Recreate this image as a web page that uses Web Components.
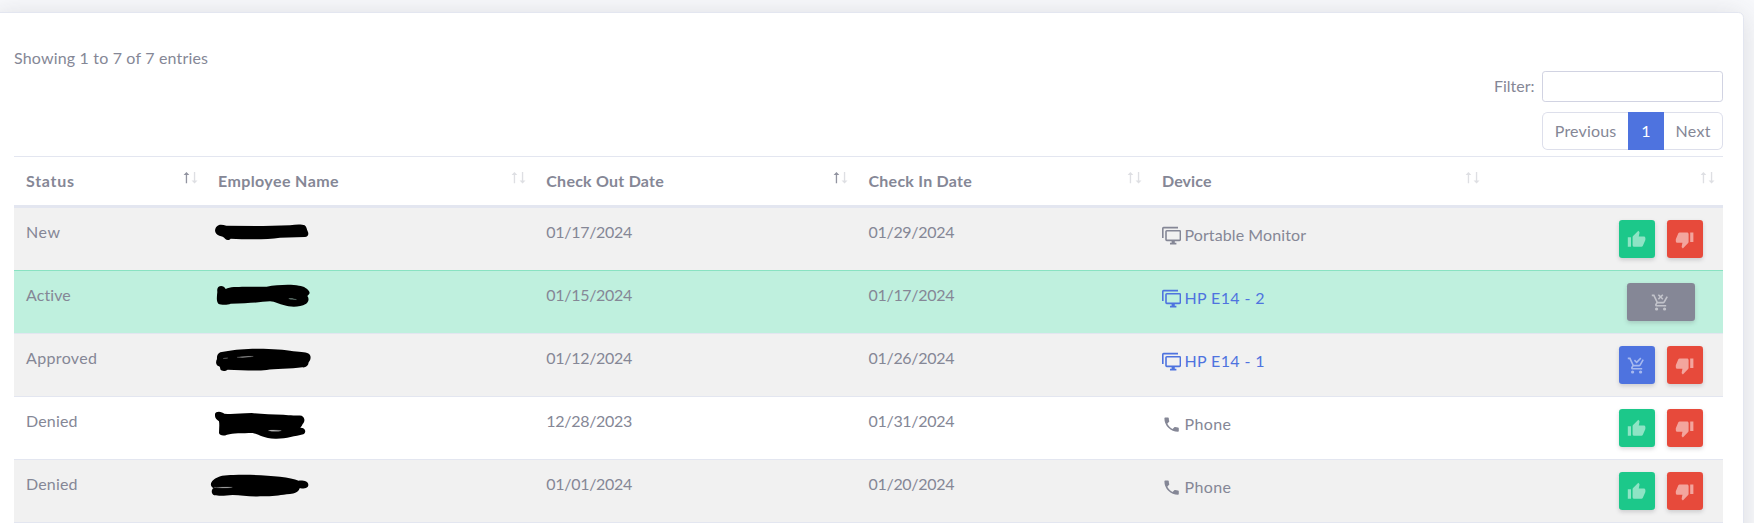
<!DOCTYPE html>
<html lang="en">
<head>
<meta charset="utf-8">
<title>Equipment checkouts</title>
<style>
html,body{margin:0;height:100%;overflow:hidden}
body{background:#f8f9fc;color:#858796;font:400 16px/24px Lato,"Open Sans",sans-serif}
</style>
</head>
<body>
<checkout-page></checkout-page>
<script>
const define = (name, cls) => customElements.define(name, cls);

/* A single line of text spread over a set advance width. */
define('fit-text', class extends HTMLElement {
  connectedCallback() {
    if (this.shadowRoot) return;
    const root = this.attachShadow({mode: 'open'});
    root.innerHTML = `<style>:host{display:inline-block;white-space:pre}span{display:inline-block}</style><span><slot></slot></span>`;
    const span = root.querySelector('span');
    const want = parseFloat(this.getAttribute('w'));
    const n = this.textContent.length;
    if (want && n > 1) {
      const gap = (want - span.getBoundingClientRect().width) / (n - 1);
      this.style.letterSpacing = gap.toFixed(3) + 'px';
      this.style.width = want + 'px';
    }
  }
});

const ICONS = {
  up: 'M23 10C23 8.89 22.1 8 21 8H14.68L15.64 3.43C15.66 3.33 15.67 3.22 15.67 3.11C15.67 2.7 15.5 2.32 15.23 2.05L14.17 1L7.59 7.58C7.22 7.95 7 8.45 7 9V19A2 2 0 0 0 9 21H18C18.83 21 19.54 20.5 19.84 19.78L22.86 12.73C22.95 12.5 23 12.26 23 12V10M1 21H5V9H1V21Z',
  down: 'M19 15H23V3H19M15 3H6C5.17 3 4.46 3.5 4.16 4.22L1.14 11.27C1.05 11.5 1 11.74 1 12V14A2 2 0 0 0 3 16H9.31L8.36 20.57C8.34 20.67 8.33 20.77 8.33 20.88C8.33 21.3 8.5 21.67 8.77 21.94L9.83 23L16.41 16.41C16.78 16.05 17 15.55 17 15V5C17 3.89 16.1 3 15 3Z',
  remove: 'M14.12 8.53L12 6.41L9.88 8.54L8.47 7.12L10.59 5L8.47 2.88L9.88 1.47L12 3.59L14.12 1.46L15.54 2.88L13.41 5L15.53 7.12L14.12 8.53M7 18A2 2 0 0 1 9 20A2 2 0 0 1 7 22A2 2 0 0 1 5 20A2 2 0 0 1 7 18M17 18A2 2 0 0 1 19 20A2 2 0 0 1 17 22A2 2 0 0 1 15 20A2 2 0 0 1 17 18M7.17 14.75A.25 .25 0 0 0 7.42 15H19V17H7A2 2 0 0 1 5 15C5 14.65 5.09 14.32 5.24 14.04L6.6 11.59L3 4H1V2H4.27L5.21 4L6.16 6L8.4 10.73L8.53 11H15.55L18.31 6L19.42 4L21.16 4.96L17.3 11.97C16.96 12.58 16.3 13 15.55 13H8.1L7.2 14.63L7.17 14.75Z',
  check: 'M9 20C9 21.1 8.1 22 7 22S5 21.1 5 20 5.9 18 7 18 9 18.9 9 20M17 18C15.9 18 15 18.9 15 20S15.9 22 17 22 19 21.1 19 20 18.1 18 17 18M7.2 14.8V14.7L8.1 13H15.5C16.2 13 16.9 12.6 17.2 12L21.1 5L19.4 4L15.5 11H8.5L4.3 2H1V4H3L6.6 11.6L5.2 14C5.1 14.3 5 14.6 5 15C5 16.1 5.9 17 7 17H19V15H7.4C7.3 15 7.2 14.9 7.2 14.8M12 9.3L8.6 5.9L10 4.5L12 6.5L16.6 1.9L18 3.3L12 9.3Z',
  monitor: 'M22 17V7H6V17H22M22 5A2 2 0 0 1 24 7V17C24 18.1 23.1 19 22 19H16V21H18V23H10V21H12V19H6C4.89 19 4 18.1 4 17V7A2 2 0 0 1 6 5H22M2 3V15H0V3A2 2 0 0 1 2 1H20V3H2Z',
  phone: 'M6.62 10.79C8.06 13.62 10.38 15.94 13.21 17.38L15.41 15.18C15.69 14.9 16.08 14.82 16.43 14.93C17.55 15.3 18.75 15.5 20 15.5A1 1 0 0 1 21 16.5V20A1 1 0 0 1 20 21A17 17 0 0 1 3 4A1 1 0 0 1 4 3H7.5A1 1 0 0 1 8.5 4C8.5 5.25 8.7 6.45 9.07 7.57C9.18 7.92 9.1 8.31 8.82 8.59L6.62 10.79Z'
};
define('mdi-icon', class extends HTMLElement {
  connectedCallback() {
    this.attachShadow({mode: 'open'}).innerHTML = `<style>:host{display:block;width:19.2px;height:19.2px}svg{display:block}</style>
      <svg width="19.2" height="19.2" viewBox="0 0 24 24" fill="currentColor"><path d="${ICONS[this.getAttribute('name')]}"/></svg>`;
  }
});

define('action-button', class extends HTMLElement {
  connectedCallback() {
    this.attachShadow({mode: 'open'}).innerHTML = `<style>
      :host{display:block;width:36px;height:38px}
      :host([kind=remove]){width:68px}
      button{all:unset;box-sizing:border-box;width:100%;height:100%;display:flex;align-items:center;justify-content:center;border-radius:3.2px;background:var(--c);color:rgba(255,255,255,.5);box-shadow:0 2px 4px rgba(58,59,69,.2)}
      :host([kind=up]){--c:#1cc88a}:host([kind=down]){--c:#e74a3b}
      :host([kind=remove]){--c:#858796}:host([kind=check]){--c:#4e73df}
      mdi-icon{margin-top:2px}
      </style><button><mdi-icon name="${this.getAttribute('kind')}"></mdi-icon></button>`;
  }
});

define('sort-arrows', class extends HTMLElement {
  connectedCallback() {
    this.attachShadow({mode: 'open'}).innerHTML = `<style>
      :host{display:block;margin:15px 8px 0 0}svg{display:block}
      g{opacity:.27}:host([active]) .a{opacity:.9}</style>
      <svg width="15" height="12" fill="currentColor">
      <g class="a"><path d="M2.8 2h1.3v9.3H2.8zM3.45 0L6.3 2.9H.6z"/></g>
      <g><path d="M10.9 0h1.3v9.3h-1.3zM11.55 11.4L8.6 8.4h5.9z"/></g></svg>`;
  }
});

define('head-cell', class extends HTMLElement {
  connectedCallback() {
    this.attachShadow({mode: 'open'}).innerHTML = `<style>
      :host{display:flex;justify-content:space-between;padding-left:12px;font-weight:700}
      div{padding-top:12px}</style><div><slot></slot></div>
      <sort-arrows ${this.hasAttribute('active') ? 'active' : ''}></sort-arrows>`;
  }
});

/* Marker strokes that cover a name; units are thirds of a pixel. */
const MARKS = [
  {y: 24, d: 'M657 75C664 73 671 75 679 77L790 78 870 76C889 73 906 73 914 76C920 80 920 88 923 94C928 103 923 110 915 111L840 113C800 119 744 119 692 116C689 121 680 122 676 117C672 111 665 108 658 107C641 102 641 82 657 75Z'},
  {y: 213, d: 'M655 261C662 255 673 258 677 267C690 259 710 261 735 260L800 260C830 255 870 252 897 257C912 258 924 267 928 275C931 282 925 285 922 288C929 296 925 308 917 312C900 323 867 321 853 316C838 313 825 304 810 304C783 306 750 310 692 311C683 315 663 315 655 311C648 304 651 287 652 276C651 270 652 264 655 261Z', hole: 'M866 296C875 294 884 297 890 299C882 298 873 299 866 296Z', tint: '#8aa99c'},
  {y: 402, d: 'M661 457C685 453 710 448 745 447C800 445 850 449 880 454C905 456 922 457 928 463C935 470 931 482 926 487C925 498 918 503 907 502C875 507 820 506 800 510C760 514 720 509 683 509C676 515 664 514 661 508C661 501 659 498 653 497C646 491 648 482 651 477C650 468 653 461 661 457Z', hole: 'M669 476C675 473 680 474 684 474ZM711 472C730 469 745 469 760 469C745 472 735 473 711 472Z', tint: '#aaa'},
  {y: 591, d: 'M649 637C658 632 668 638 673 641C700 643 720 640 755 639C785 642 815 644 850 644C870 647 892 645 905 647C917 654 914 666 908 672C906 678 903 681 901 683C917 683 920 697 910 703C885 708 860 716 830 716C790 717 780 704 758 699C725 700 700 699 681 704C670 709 658 706 657 699C657 688 659 676 657 664C649 658 644 653 645 644C645 641 646 639 649 637Z', hole: 'M805 692C817 689 832 691 844 692C835 694 818 694 805 692Z', tint: '#ddd'},
  {y: 780, d: 'M640 840C655 827 675 825 700 825C750 822 800 827 840 830C865 833 883 837 896 842C914 841 924 845 925 854C925 863 918 866 899 865C894 878 884 881 870 882C840 884 825 890 790 889C750 891 725 886 698 885C675 888 655 888 643 886C633 883 633 868 641 864C630 859 630 849 640 840Z', hole: 'M642 862C660 863 678 860 697 862C680 864 660 865 642 862Z', tint: '#bbb'}
];
define('marker-stroke', class extends HTMLElement {
  connectedCallback() {
    const m = MARKS[+this.getAttribute('n')];
    this.attachShadow({mode: 'open'}).innerHTML = `<style>:host{display:block;width:120px;height:62px;margin-left:-6px}svg{display:block}</style>
      <svg width="120" height="62" viewBox="600 ${m.y} 360 186"><path d="${m.d}"/>${m.hole ? `<path d="${m.hole}" fill="${m.tint}" stroke="${m.tint}" stroke-width=".6"/>` : ''}</svg>`;
  }
});

define('checkout-row', class extends HTMLElement {
  connectedCallback() {
    const a = k => this.getAttribute(k);
    this.attachShadow({mode: 'open'}).innerHTML = `<style>
      :host{display:grid;grid-template-columns:var(--cols);height:62px;border-top:1px solid #e3e6f0;background:#fff}
      :host([first]){border-top:0}
      :host([striped]){background:#f1f1f1}
      :host([active]){background:#bff0de;border-top-color:#89e2c2}
      .t{padding:12px 0 0 12px}
      .dev{display:flex;align-items:flex-start;padding:18px 0 0 12px}
      .dev.link{color:#4e73df}
      .dev fit-text{margin:-3px 0 0 3.3px}
      .act{display:flex;justify-content:flex-end;gap:12px;padding:12px 20px 0 0}
      .act.single{padding-right:28px}
      </style>
      <div class="t"><fit-text w="${a('sw')}">${a('status')}</fit-text></div>
      <marker-stroke n="${a('n')}"></marker-stroke>
      <div class="t"><fit-text w="86">${a('out')}</fit-text></div>
      <div class="t"><fit-text w="86">${a('in')}</fit-text></div>
      <div class="dev ${this.hasAttribute('link') ? 'link' : ''}"><mdi-icon name="${a('icon')}"></mdi-icon><fit-text w="${a('dw')}">${a('device')}</fit-text></div>
      <div class="act ${a('actions').includes(' ') ? '' : 'single'}">${a('actions').split(' ').map(k => `<action-button kind="${k}"></action-button>`).join('')}</div>`;
  }
});

define('filter-box', class extends HTMLElement {
  connectedCallback() {
    this.attachShadow({mode: 'open'}).innerHTML = `<style>
      :host{display:block}label{display:flex;justify-content:flex-end;align-items:center;gap:7.5px}
      fit-text{margin-bottom:2px}
      input{box-sizing:border-box;width:181px;height:31px;border:1px solid #d1d3e2;border-radius:3.2px;background:#fff;padding:4px 8px;font:inherit;outline:0}
      </style><label><fit-text w="40.5">Filter:</fit-text><input type="search" aria-label="Filter"></label>`;
  }
});

define('page-nav', class extends HTMLElement {
  connectedCallback() {
    this.attachShadow({mode: 'open'}).innerHTML = `<style>
      :host{display:flex;justify-content:flex-end}
      nav{display:flex;box-sizing:border-box;width:181px;height:38px}
      span{box-sizing:border-box;display:flex;align-items:center;justify-content:center;border:1px solid #dddfeb;background:#fff}
      .p{width:86px;border-right:0;border-radius:5.6px 0 0 5.6px}
      .c{width:36px;background:#4e73df;border-color:#4e73df;color:#fff}
      .n{width:59px;border-left:0;border-radius:0 5.6px 5.6px 0}
      </style><nav><span class="p"><fit-text w="61.5">Previous</fit-text></span><span class="c">1</span><span class="n"><fit-text w="35">Next</fit-text></span></nav>`;
  }
});

define('checkout-page', class extends HTMLElement {
  connectedCallback() {
    this.attachShadow({mode: 'open'}).innerHTML = `<style>
      :host{display:block;overflow:hidden;height:523px}
      .card{box-sizing:border-box;width:1751px;height:700px;margin:12px 0 0 -7px;padding:33px 20px 0;background:#fff;border:1px solid #e3e6f0;border-radius:5.6px;box-shadow:0 2.4px 28px rgba(58,59,69,.15)}
      .info{height:25px}
      page-nav{margin:10px 0 6px}
      .table{--cols:192px 328.3px 322.2px 293.5px 338px 235px}
      .head{display:grid;grid-template-columns:var(--cols);height:48px;border-top:1px solid #e3e6f0;border-bottom:3px solid #e3e6f0}
      .end{border-top:1px solid #e3e6f0}
      </style>
      <div class="card">
        <div class="info"><fit-text w="194">Showing 1 to 7 of 7 entries</fit-text></div>
        <filter-box></filter-box>
        <page-nav></page-nav>
        <div class="table">
          <div class="head">
            <head-cell active><fit-text w="48">Status</fit-text></head-cell>
            <head-cell><fit-text w="120.5">Employee Name</fit-text></head-cell>
            <head-cell active><fit-text w="117.5">Check Out Date</fit-text></head-cell>
            <head-cell><fit-text w="103.3">Check In Date</fit-text></head-cell>
            <head-cell><fit-text w="49.5">Device</fit-text></head-cell>
            <head-cell></head-cell>
          </div>
          <checkout-row first striped n="0" status="New" sw="34" out="01/17/2024" in="01/29/2024" icon="monitor" device="Portable Monitor" dw="121.5" actions="up down"></checkout-row>
          <checkout-row active link n="1" status="Active" sw="45" out="01/15/2024" in="01/17/2024" icon="monitor" device="HP E14 - 2" dw="80" actions="remove"></checkout-row>
          <checkout-row striped link n="2" status="Approved" sw="71" out="01/12/2024" in="01/26/2024" icon="monitor" device="HP E14 - 1" dw="80" actions="check down"></checkout-row>
          <checkout-row n="3" status="Denied" sw="51.5" out="12/28/2023" in="01/31/2024" icon="phone" device="Phone" dw="46.5" actions="up down"></checkout-row>
          <checkout-row striped n="4" status="Denied" sw="51.5" out="01/01/2024" in="01/20/2024" icon="phone" device="Phone" dw="46.5" actions="up down"></checkout-row>
          <div class="end"></div>
        </div>
      </div>`;
  }
});
</script>
</body>
</html>
